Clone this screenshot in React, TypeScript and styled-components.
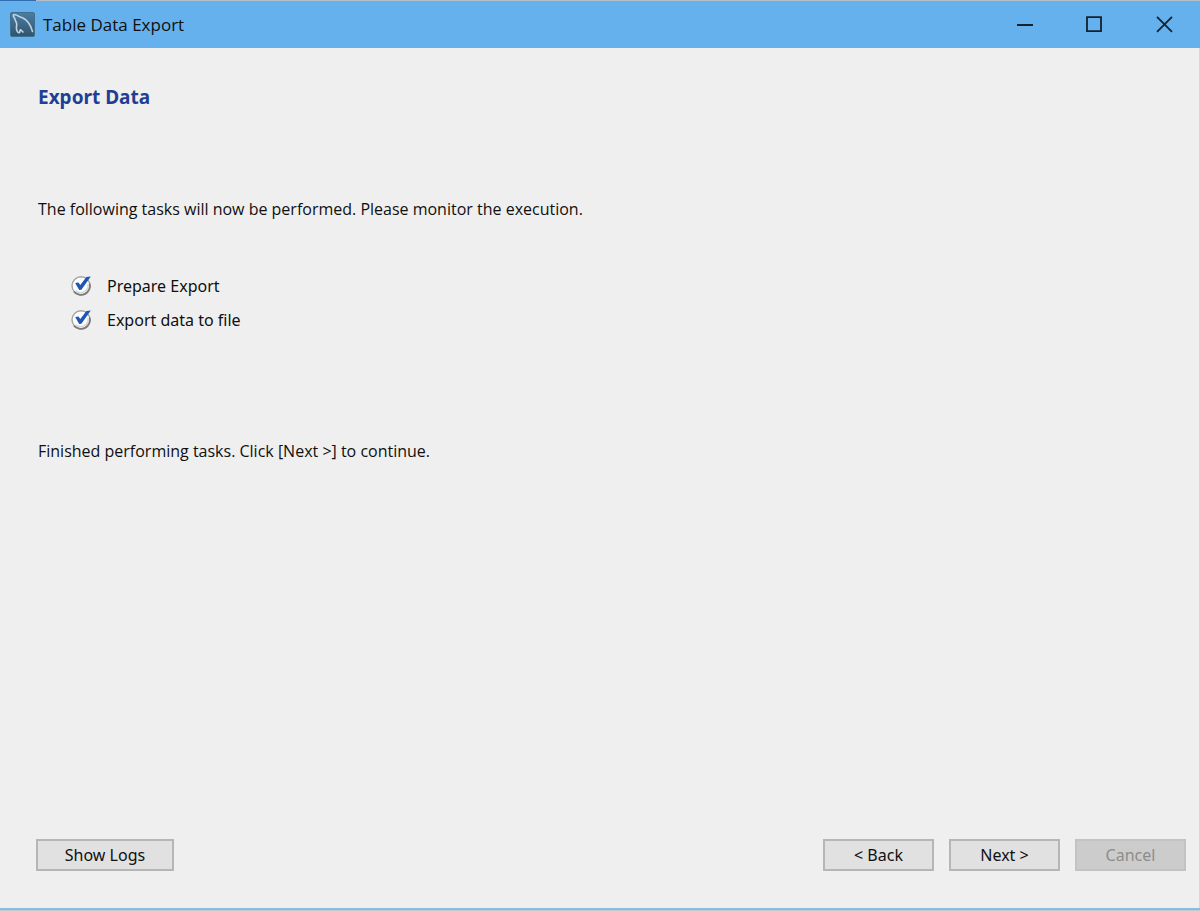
import React from "react";
import styled, { createGlobalStyle } from "styled-components";

const GlobalStyle = createGlobalStyle`
  *, *::before, *::after { box-sizing: border-box; }
  body { margin: 0; background: #c4c8cb; }
`;

const Desktop = styled.div`
  min-height: 100vh;
  display: flex;
  flex-direction: column;
  padding-bottom: 1px;
  font-family: "Noto Sans", "Open Sans", sans-serif;
  font-size: 16px;
  line-height: 24px;
  color: #101010;
`;

const Backdrop = styled.div`
  height: 1px;
  background: linear-gradient(to right, #2f6cb0 36px, #b4bfc9 36px);
`;

const Window = styled.div`
  flex: 1;
  display: flex;
  flex-direction: column;
  background: #efefef;
  border-bottom: 2px solid #8abbdf;
`;

const TitleBar = styled.header`
  height: 47px;
  display: flex;
  align-items: center;
  padding-left: 10px;
  background: #65b1ee;
`;

const WindowTitle = styled.span`
  flex: 1;
  margin-left: 8px;
  font-family: "Open Sans", "Noto Sans", sans-serif;
  font-size: 17px;
`;

const WindowControl = styled.button`
  width: 70px;
  height: 47px;
  display: flex;
  align-items: center;
  justify-content: center;
  padding: 0;
  border: 0;
  background: transparent;
  color: #14222e;
`;

const Body = styled.main`
  flex: 1;
  padding: 37px 38px 0;
  border-right: 1px solid #c5dceb;
`;

const Heading = styled.h1`
  margin: 0;
  font-size: 19px;
  line-height: 24px;
  font-weight: 700;
  color: #1f3f94;
`;

const Message = styled.p<{ $gap: number }>`
  margin: ${(p) => p.$gap}px 0 0;
  font-family: "Open Sans", "Noto Sans", sans-serif;
`;

const TaskList = styled.ul`
  margin: 48px 0 0;
  padding: 0 0 0 32px;
  list-style: none;
  line-height: 34px;
`;

const Task = styled.li`
  display: flex;
  align-items: center;
  gap: 14px;
`;

const Footer = styled.footer`
  display: flex;
  justify-content: space-between;
  padding: 0 13px 37px 36px;
  border-right: 1px solid #c5dceb;
`;

const ButtonGroup = styled.div`
  display: flex;
  gap: 15px;
`;

const Button = styled.button<{ $wide?: boolean }>`
  width: ${(p) => (p.$wide ? 138 : 111)}px;
  height: 32px;
  padding: 0;
  border: 2px solid #b6b6b6;
  background: #e1e1e1;
  font: inherit;
  color: #101010;
  &:disabled {
    border-color: #c3c3c3;
    background: #cccccc;
    color: #8d8d8d;
  }
`;

const DolphinIcon = () => (
  <svg width="25" height="25" viewBox="0 0 25 25" aria-hidden="true">
    <defs>
      <linearGradient id="tile" x1="0" y1="0" x2="0" y2="1">
        <stop offset="0" stopColor="#4b7da3" />
        <stop offset="1" stopColor="#2f536f" />
      </linearGradient>
    </defs>
    <rect x="0.5" y="0.5" width="24" height="24" rx="1.5" fill="url(#tile)" stroke="#41708f" />
    <path
      d="M22.5 19.5C20.8 13.5 17.5 8 12.5 5.8C10.6 4.9 9.2 4.6 8 3.8C6.3 2.7 3.8 2.2 3.3 3.2C2.9 4.2 4.7 6 5.1 7.6C5.5 9.2 6.5 10.2 6.7 12C6.9 13.6 6 15.5 6.6 17.6C7 19.3 8.2 21 9.3 20.7C10.3 20.3 9.6 18.3 10.3 17.8C10.9 17.5 12 19.2 13 20"
      fill="none"
      stroke="#c3d3df"
      strokeWidth="1.6"
      strokeLinecap="round"
      strokeLinejoin="round"
    />
  </svg>
);

const TaskDoneIcon = () => (
  <svg width="23" height="22" viewBox="0 0 23 22" role="img" aria-label="Done">
    <circle cx="11" cy="10.8" r="9" fill="#fdfdfd" stroke="#a4a4a4" strokeWidth="1.4" />
    <path d="M4 16.6A9 9 0 0 0 19.6 8.4" fill="none" stroke="#7c7c7c" strokeWidth="1.8" />
    <path d="M5.8 15.8A7.4 7.4 0 0 0 18 9" fill="none" stroke="#d6d6d6" strokeWidth="1.4" />
    <path d="M5.2 8L8.4 7.4L10.3 10L16.4 2L20.8 1.4L11.4 14.8L9.2 15Z" fill="#1d55b8" />
  </svg>
);

const tasks = ["Prepare Export", "Export data to file"];

export default function App() {
  return (
    <Desktop>
      <GlobalStyle />
      <Backdrop />
      <Window>
        <TitleBar>
          <DolphinIcon />
          <WindowTitle>Table Data Export</WindowTitle>
          <WindowControl aria-label="Minimize">
            <svg width="18" height="18" viewBox="0 0 18 18">
              <path d="M1 9H17" stroke="currentColor" strokeWidth="2" />
            </svg>
          </WindowControl>
          <WindowControl aria-label="Maximize">
            <svg width="18" height="18" viewBox="0 0 18 18">
              <path d="M1 1.2H15V15.2H1Z" fill="none" stroke="currentColor" strokeWidth="1.8" />
            </svg>
          </WindowControl>
          <WindowControl aria-label="Close">
            <svg width="18" height="18" viewBox="0 0 18 18">
              <path d="M1 0.8L16 15.8M16 0.8L1 15.8" stroke="currentColor" strokeWidth="1.8" />
            </svg>
          </WindowControl>
        </TitleBar>
        <Body>
          <Heading>Export Data</Heading>
          <Message $gap={88}>
            The following tasks will now be performed. Please monitor the execution.
          </Message>
          <TaskList>
            {tasks.map((task) => (
              <Task key={task}>
                <TaskDoneIcon />
                {task}
              </Task>
            ))}
          </TaskList>
          <Message $gap={102}>
            Finished performing tasks. Click [Next &gt;] to continue.
          </Message>
        </Body>
        <Footer>
          <Button $wide>Show Logs</Button>
          <ButtonGroup>
            <Button>&lt; Back</Button>
            <Button>Next &gt;</Button>
            <Button disabled>Cancel</Button>
          </ButtonGroup>
        </Footer>
      </Window>
    </Desktop>
  );
}
